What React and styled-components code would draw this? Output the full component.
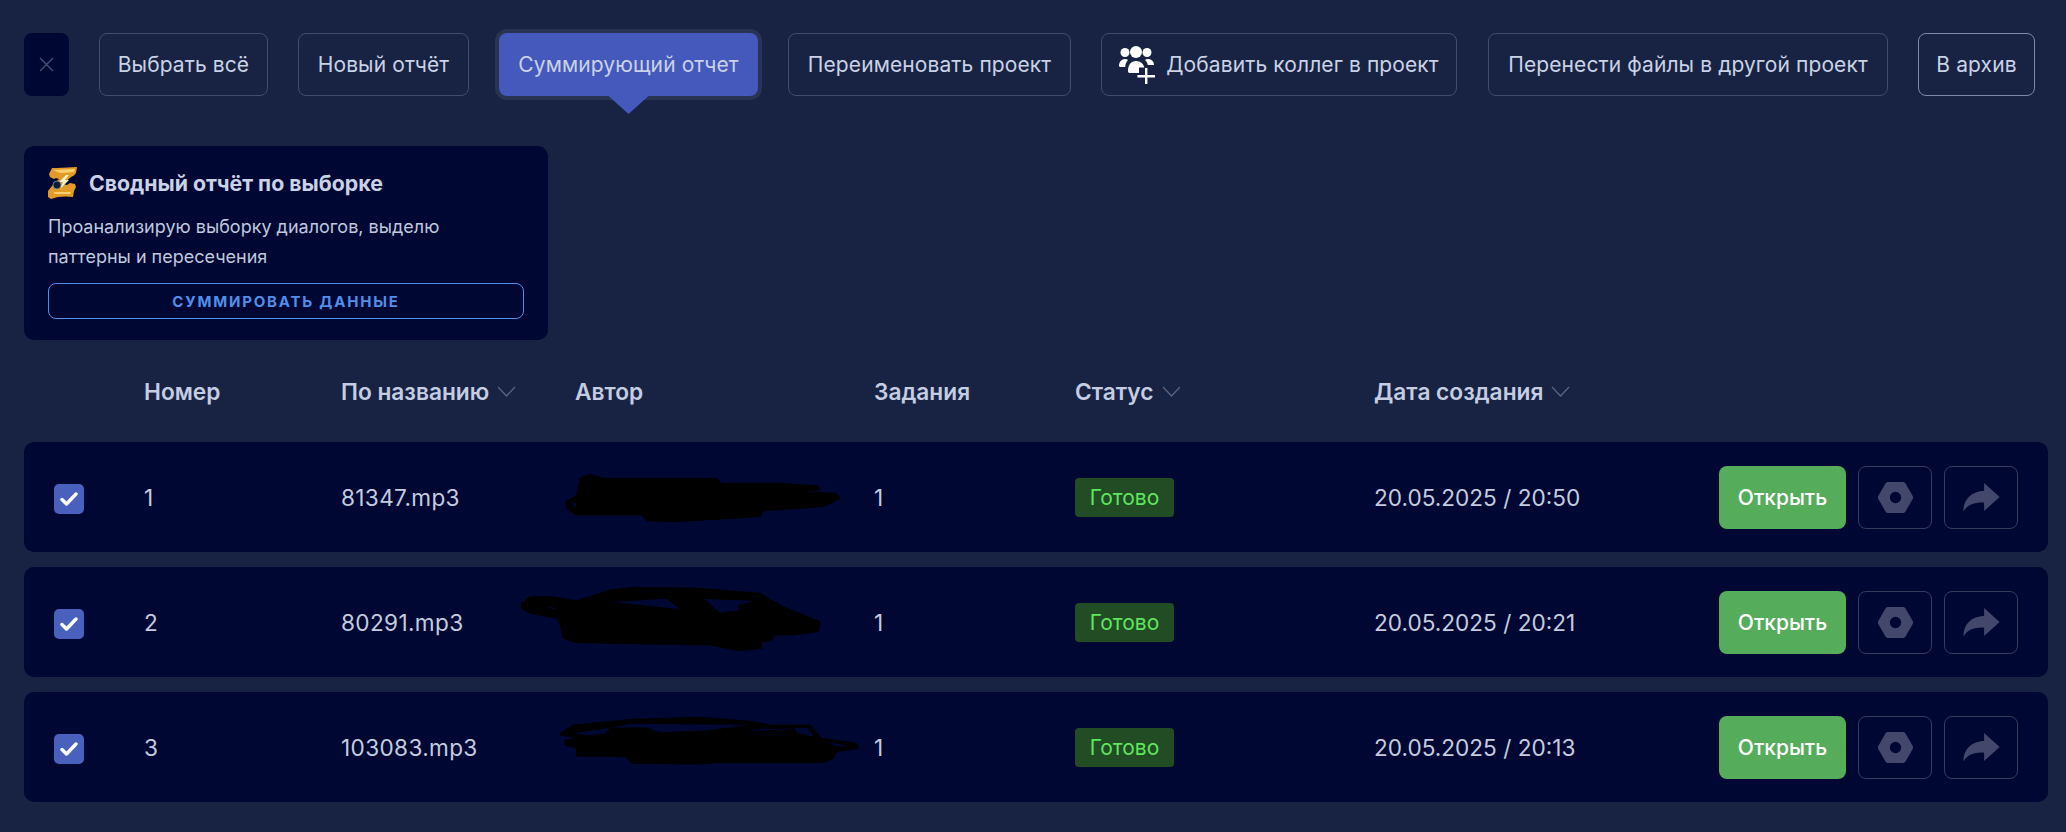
import React from 'react';
import styled, { createGlobalStyle } from 'styled-components';

const GlobalStyle = createGlobalStyle`
  html, body {
    margin: 0;
    padding: 0;
    background: #182343;
  }
  body {
    font-family: Inter, "Noto Sans", sans-serif;
    color: #c9d2e6;
  }
`;

const Page = styled.div`
  width: 2066px;
  height: 832px;
  box-sizing: border-box;
  padding: 33px 18px 0 24px;
  background: #182343;
  overflow: hidden;
`;

const Toolbar = styled.div`
  display: flex;
  align-items: flex-start;
  height: 63px;
`;

const CloseButton = styled.button`
  width: 45px;
  height: 63px;
  flex: none;
  margin-right: 30px;
  padding: 0;
  display: flex;
  align-items: center;
  justify-content: center;
  background: #000733;
  border: none;
  border-radius: 8px;
  color: #4a5273;
`;

const ToolButton = styled.button`
  position: relative;
  flex: none;
  width: ${(props) => props.$w}px;
  height: 63px;
  margin-right: ${(props) => props.$mr ?? 30}px;
  padding: 0;
  display: flex;
  align-items: center;
  justify-content: center;
  gap: 11px;
  box-sizing: border-box;
  background: ${(props) => (props.$active ? '#4559bd' : 'transparent')};
  border: ${(props) => (props.$active ? 'none' : `1px solid ${props.$strong ? '#7f88a6' : '#424b6c'}`)};
  border-radius: 8px;
  box-shadow: ${(props) => (props.$active ? '0 0 0 4px #293354' : 'none')};
  color: #c9d2e6;
  font-family: inherit;
  font-size: 21px;
  letter-spacing: 0.1px;
  white-space: nowrap;
`;

const ButtonTail = styled.span`
  position: absolute;
  left: 50%;
  bottom: -18px;
  width: 40px;
  height: 18px;
  margin-left: -20px;
  background: #4559bd;
  clip-path: polygon(0 0, 100% 0, 50% 100%);
`;

const ReportCard = styled.div`
  width: 524px;
  height: 194px;
  box-sizing: border-box;
  margin-top: 50px;
  padding: 21px 24px 0;
  background: #000733;
  border-radius: 10px;
`;

const CardTitle = styled.div`
  display: flex;
  align-items: center;
  gap: 11px;
  height: 31px;
  font-size: 21.3px;
  font-weight: 700;
`;

const CardText = styled.p`
  margin: 14px 0 0;
  font-size: 18px;
  line-height: 30px;
  color: #bfc8dd;
`;

const SummaryButton = styled.button`
  display: block;
  width: 100%;
  height: 36px;
  margin-top: 11px;
  padding: 0;
  background: transparent;
  border: 1px solid #4f8fea;
  border-radius: 8px;
  color: #4f8fea;
  font-family: inherit;
  font-size: 15px;
  font-weight: 700;
  letter-spacing: 1.8px;
`;

const columns = '120px 197px 234px 299px 201px 299px 1fr auto';

const HeaderRow = styled.div`
  display: grid;
  grid-template-columns: ${columns};
  align-items: center;
  height: 102px;
  font-size: 22.7px;
  font-weight: 600;
  color: #c4cde2;
`;

const HeaderCell = styled.div`
  display: flex;
  align-items: center;
  gap: 8px;
  &:first-child {
    grid-column: 2;
  }
`;

const Rows = styled.div`
  display: flex;
  flex-direction: column;
  gap: 15px;
`;

const Row = styled.div`
  display: grid;
  grid-template-columns: ${columns};
  align-items: center;
  height: 110px;
  background: #000733;
  border-radius: 10px;
  font-size: 22.6px;
  color: #c3ccdf;
`;

const CheckCell = styled.div`
  padding: 3px 0 0 30px;
`;

const CheckBox = styled.span`
  display: flex;
  align-items: center;
  justify-content: center;
  width: 30px;
  height: 30px;
  box-sizing: border-box;
  background: #4a60bd;
  border-radius: 5px;
`;

const FileName = styled.div`
  letter-spacing: 0.35px;
`;

const AuthorCell = styled.div`
  position: relative;
  height: 110px;
`;

const Scribble = styled.svg`
  position: absolute;
  left: ${(props) => props.$left}px;
  top: 0;
  overflow: visible;
`;

const StatusBadge = styled.span`
  display: inline-block;
  width: 99px;
  height: 39px;
  line-height: 39px;
  text-align: center;
  background: #224c24;
  border-radius: 4px;
  color: #5ee65e;
  font-size: 21px;
`;

const Actions = styled.div`
  display: flex;
  gap: 12px;
  padding-right: 30px;
`;

const OpenButton = styled.button`
  width: 127px;
  height: 63px;
  padding: 0;
  background: #55ad5b;
  border: none;
  border-radius: 8px;
  color: #fff;
  font-family: inherit;
  font-size: 21px;
  font-weight: 500;
`;

const IconButton = styled.button`
  width: 74px;
  height: 63px;
  padding: 0;
  display: flex;
  align-items: center;
  justify-content: center;
  background: transparent;
  border: 1px solid #353c5c;
  border-radius: 8px;
`;

const Chevron = () => (
  <svg width="19" height="11" viewBox="0 0 19 11" fill="none" stroke="#5a6380" strokeWidth="1.3">
    <path d="M1 1l8.5 9L18 1" />
  </svg>
);

const CloseIcon = () => (
  <svg width="15" height="15" viewBox="0 0 15 15" fill="none" stroke="currentColor" strokeWidth="1.3">
    <path d="M1 1l13 13M14 1L1 14" />
  </svg>
);

const TeamIcon = () => (
  <svg width="36" height="38" viewBox="0 0 36 38" fill="#fff">
    <circle cx="6" cy="6.500" r="4.500" />
    <circle cx="17" cy="6" r="6" />
    <circle cx="28" cy="6.500" r="4.500" />
    <path d="M0 20c0-4 2.500-7 6-7 1.300 0 2.300.3 3 .9-1.800 2-2.600 4-2.800 7H1c-.6 0-1-.4-1-.9z" />
    <path d="M35 19c0-3.500-2.500-6-6-6-1.300 0-2.300.3-3 .9 1.500 1.400 2.400 3 2.800 5.100z" />
    <path d="M9 25c0-6 3-10 8-10s7.500 3 8.300 6.500H20V27H10.500C9.600 27 9 26 9 25z" />
    <path d="M26 22h2.400v7H36v2.400h-7.600V38H26v-6.600h-7.600V29H26z" />
  </svg>
);

const ZapLogo = () => (
  <svg width="30" height="32" viewBox="0 0 30 32">
    <path d="M4 1h5l20-1-1 6c-1 2-3 3-5 4l-8 7 4 1 3-2 5 1 1 3-2 4-1 6-7-.5-8 .5-7 2-3-2v-6l4-5 7-7-3-1-2 1-4-2-1-3z" fill="#e39b28" />
    <path d="M5 3l22-1-1 3c-4 0-9 1-14 1zM6 25h17l-1 2H6z" fill="#f8d06e" />
    <path d="M18 8l-7 7h4l-3 7 9-9h-4l4-5z" fill="#f7f2c4" />
    <circle cx="9" cy="18" r="4" fill="#0d1b33" stroke="#8494aa" strokeWidth="0.8" />
  </svg>
);

const NutIcon = () => (
  <svg width="37" height="33" viewBox="0 0 36 32" fill="#42476b">
    <path fillRule="evenodd" d="M10 1h16l1.500 1L35 15v2l-7.500 13-1.500 1H10l-1.500-1L1 17v-2L8.500 2zM18 10.500a5.500 5.500 0 100 11 5.500 5.500 0 000-11z" />
  </svg>
);

const ShareIcon = () => (
  <svg width="38" height="29" viewBox="0 0 36 28" fill="#42476b">
    <path d="M21 0l15 13.500L21 27V19C12 18.500 5 21 1 27.500 1 15 9 8.500 21 7.500z" />
  </svg>
);

const CheckMark = () => (
  <svg width="18" height="14" viewBox="0 0 18 14" fill="none" stroke="#fff" strokeWidth="3.400" strokeLinecap="round" strokeLinejoin="round">
    <path d="M2 7.500l4.500 4.500L16 2" />
  </svg>
);

// black marker over the author names, each traced in 3x coordinates
const scribbles = [
  {
    left: -35,
    width: 320,
    viewBox: '0 -24 960 330',
    d: 'M120 85L150 72L190 85L530 85L545 100L730 100L835 108L838 120L780 125L890 130L900 145L850 170L670 182L660 200L400 215L320 212L305 195L110 195L80 175L78 155L110 135L115 115Z M95 155L110 158L110 175L98 170Z',
  },
  {
    left: -75,
    width: 400,
    viewBox: '0 -9 1200 330',
    d: 'M65 100L90 80L150 80L230 92L330 60L400 52L600 55L780 70L850 110L960 155L955 185L880 195L825 195L815 212L785 215L785 235L720 242L630 225L230 218L190 205L180 160L170 145L90 130L65 115Z M105 106L170 112L170 120Z M320 95L500 85L545 120Z M610 85L780 92L715 105L720 122L660 130Z',
  },
  {
    left: -75,
    width: 400,
    viewBox: '0 366 1200 330',
    d: 'M180 490L220 465L400 448L600 442L760 455L810 465L930 465L965 505L1070 520L1075 535L1010 545L1000 565L970 578L650 578L590 582L400 580L375 560L230 558L230 535L195 525L195 510L240 505L180 495Z M215 490L400 460L770 463L620 483L480 488L440 474L330 474L318 492L265 497Z M880 472L925 472L945 503L890 490Z M700 490L780 475L880 474L870 480L770 483Z M965 512L1060 528L1010 530Z',
  },
];

const items = [
  { id: 1, name: '81347.mp3', date: '20.05.2025 / 20:50' },
  { id: 2, name: '80291.mp3', date: '20.05.2025 / 20:21' },
  { id: 3, name: '103083.mp3', date: '20.05.2025 / 20:13' },
];

const App = () => (
  <Page>
    <GlobalStyle />
    <Toolbar>
      <CloseButton><CloseIcon /></CloseButton>
      <ToolButton $w={169}>Выбрать всё</ToolButton>
      <ToolButton $w={171}>Новый отчёт</ToolButton>
      <ToolButton $w={259} $active>
        Суммирующий отчет
        <ButtonTail />
      </ToolButton>
      <ToolButton $w={283}>Переименовать проект</ToolButton>
      <ToolButton $w={356} $mr={31}><TeamIcon />Добавить коллег в проект</ToolButton>
      <ToolButton $w={400}>Перенести файлы в другой проект</ToolButton>
      <ToolButton $w={117} $strong $mr={0}>В архив</ToolButton>
    </Toolbar>

    <ReportCard>
      <CardTitle><ZapLogo />Сводный отчёт по выборке</CardTitle>
      <CardText>Проанализирую выборку диалогов, выделю<br />паттерны и пересечения</CardText>
      <SummaryButton>СУММИРОВАТЬ ДАННЫЕ</SummaryButton>
    </ReportCard>

    <HeaderRow>
      <HeaderCell>Номер</HeaderCell>
      <HeaderCell>По названию <Chevron /></HeaderCell>
      <HeaderCell>Автор</HeaderCell>
      <HeaderCell>Задания</HeaderCell>
      <HeaderCell>Статус <Chevron /></HeaderCell>
      <HeaderCell>Дата создания <Chevron /></HeaderCell>
    </HeaderRow>

    <Rows>
      {items.map((item, i) => (
        <Row key={item.id}>
          <CheckCell><CheckBox><CheckMark /></CheckBox></CheckCell>
          <div>{item.id}</div>
          <FileName>{item.name}</FileName>
          <AuthorCell>
            <Scribble $left={scribbles[i].left} width={scribbles[i].width} height="110" viewBox={scribbles[i].viewBox}>
              <path d={scribbles[i].d} fill="#000" fillRule="evenodd" stroke="#000" strokeWidth="3" strokeLinejoin="round" />
            </Scribble>
          </AuthorCell>
          <div>1</div>
          <div><StatusBadge>Готово</StatusBadge></div>
          <div>{item.date}</div>
          <Actions>
            <OpenButton>Открыть</OpenButton>
            <IconButton><NutIcon /></IconButton>
            <IconButton><ShareIcon /></IconButton>
          </Actions>
        </Row>
      ))}
    </Rows>
  </Page>
);

export default App;
